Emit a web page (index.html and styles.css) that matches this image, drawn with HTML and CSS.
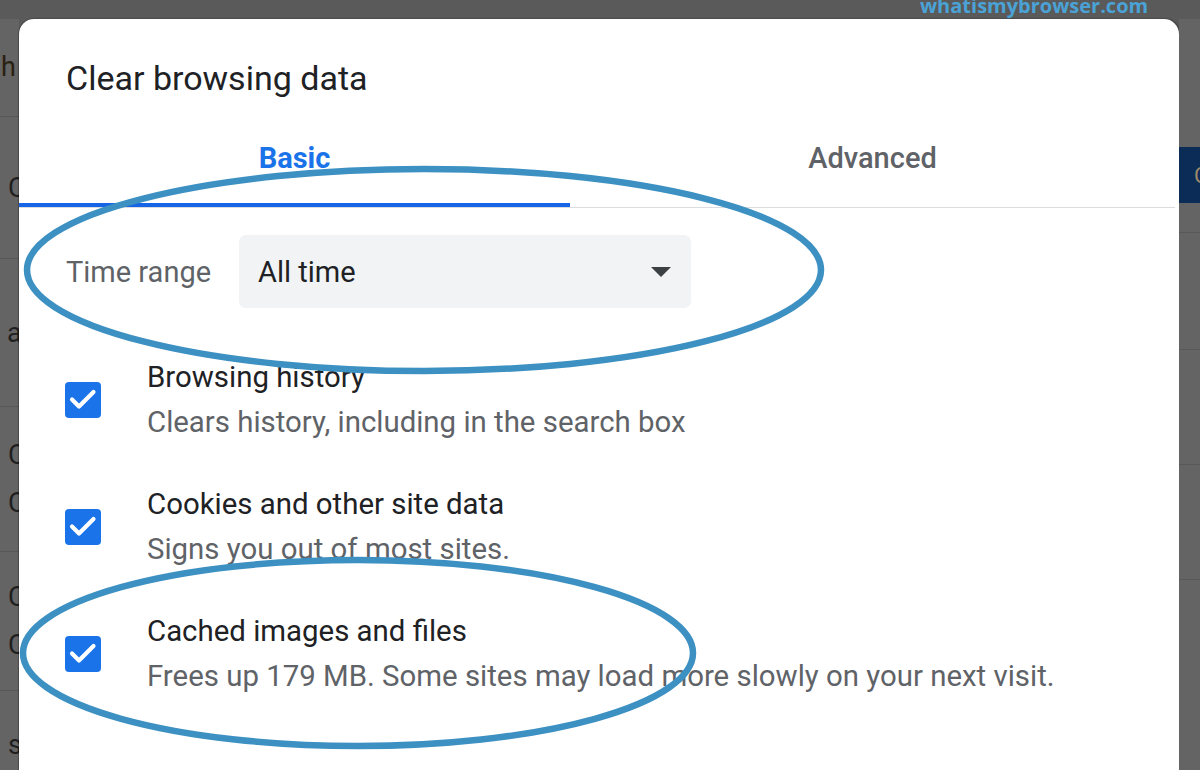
FILE: index.html
```html
<!DOCTYPE html>
<html lang="en">
<head>
<meta charset="utf-8">
<title>Clear browsing data</title>
<link rel="stylesheet" href="styles.css">
</head>
<body>
<div class="screen">
  <div class="strip strip-left">
    <div class="bg-row row-a"><span class="ch ch-h">h</span></div>
    <div class="bg-row row-b"><span class="ch ch-c">C</span></div>
    <div class="bg-row row-c"><span class="ch ch-a">a</span></div>
    <div class="bg-row row-d"><span class="ch ch-c">C</span><span class="ch ch-c">C</span></div>
    <div class="bg-row row-e"><span class="ch ch-c">C</span><span class="ch ch-c">C</span></div>
    <div class="bg-row row-f"><span class="ch ch-s">s</span></div>
  </div>

  <main class="dialog">
    <h1 class="dialog-title">Clear browsing data</h1>
    <div class="tabs">
      <div class="tab tab-active">Basic</div>
      <div class="tab tab-other">Advanced</div>
    </div>

    <div class="time-range">
      <span class="label">Time range</span>
      <div class="select">
        <span>All time</span>
        <span class="arrow"></span>
      </div>
    </div>

    <div class="items">
      <div class="item">
        <div class="checkbox"><svg viewBox="0 0 36 36" width="36" height="36"><path d="M7 17.5 L14 24.5 L28.5 10" fill="none" stroke="#fff" stroke-width="4.2" stroke-linecap="round" stroke-linejoin="round"/></svg></div>
        <div class="item-text">
          <div class="item-title">Browsing history</div>
          <div class="item-desc">Clears history, including in the search box</div>
        </div>
      </div>
      <div class="item">
        <div class="checkbox"><svg viewBox="0 0 36 36" width="36" height="36"><path d="M7 17.5 L14 24.5 L28.5 10" fill="none" stroke="#fff" stroke-width="4.2" stroke-linecap="round" stroke-linejoin="round"/></svg></div>
        <div class="item-text">
          <div class="item-title">Cookies and other site data</div>
          <div class="item-desc">Signs you out of most sites.</div>
        </div>
      </div>
      <div class="item">
        <div class="checkbox"><svg viewBox="0 0 36 36" width="36" height="36"><path d="M7 17.5 L14 24.5 L28.5 10" fill="none" stroke="#fff" stroke-width="4.2" stroke-linecap="round" stroke-linejoin="round"/></svg></div>
        <div class="item-text">
          <div class="item-title">Cached images and files</div>
          <div class="item-desc">Frees up 179 MB. Some sites may load more slowly on your next visit.</div>
        </div>
      </div>
    </div>
  </main>

  <div class="strip strip-right">
    <div class="rbg rbg-1"></div>
    <div class="rbg rbg-btn"><span class="btn-ch">C</span></div>
    <div class="rbg rbg-2"></div>
    <div class="rbg rbg-3"></div>
    <div class="rbg rbg-4"></div>
    <div class="rbg rbg-5"></div>
    <div class="rbg rbg-6"></div>
  </div>
</div>

<div class="watermark">whatismybrowser.com</div>

<svg class="annotations" width="1200" height="770" viewBox="0 0 1200 770">
  <ellipse cx="424" cy="270" rx="397" ry="101" fill="none" stroke="#3c90c2" stroke-width="6.5"/>
  <ellipse cx="358" cy="653" rx="335" ry="93" fill="none" stroke="#3c90c2" stroke-width="6.5"/>
</svg>
</body>
</html>
```

FILE: styles.css
```css
* { box-sizing: border-box; }

html, body {
  margin: 0;
  padding: 0;
}

body {
  width: 1200px;
  height: 770px;
  overflow: hidden;
  background: #5a5a5a;
  font-family: Roboto, "Noto Sans", "Liberation Sans", sans-serif;
  position: relative;
}

.screen {
  display: flex;
  height: 770px;
  overflow: hidden;
}

/* ---------- dimmed page behind the dialog ---------- */
.strip {
  margin-top: 19px;
  background: #646464;
  overflow: hidden;
}

.strip-left {
  width: 19px;
  display: flex;
  flex-direction: column;
}

.bg-row {
  border-bottom: 1px solid #575757;
  display: flex;
  flex-direction: column;
  justify-content: center;
  font-size: 27px;
  line-height: 48px;
  color: #1f1f1f;
  white-space: nowrap;
}

.row-a { height: 99px; }
.row-b { height: 144px; }
.row-c { height: 149px; }
.row-d { height: 147px; }
.row-e { height: 140px; }
.row-f { height: 80px; border-bottom: 0; padding-top: 30px; }

.ch { display: block; }
.ch-h { padding-left: 1px; color: #2a2010; }
.ch-c { padding-left: 8px; }
.ch-a { padding-left: 7px; }
.ch-s { padding-left: 8px; }

.strip-right {
  width: 21px;
  display: flex;
  flex-direction: column;
}

.rbg { border-bottom: 1px solid #585858; }
.rbg-1 { height: 128px; border-bottom: 0; }
.rbg-btn {
  height: 56px;
  background: #0c2c58;
  border-bottom: 0;
  display: flex;
  align-items: center;
  font-size: 22px;
  color: #9a8a6a;
}
.btn-ch { padding-left: 15px; }
.rbg-2 { height: 30px; }
.rbg-3 { height: 117px; }
.rbg-4 { height: 115px; }
.rbg-5 { height: 115px; }
.rbg-6 { height: 115px; border-bottom: 0; }

/* ---------- dialog ---------- */
.dialog {
  width: 1160px;
  flex: none;
  margin-top: 19px;
  height: 751px;
  background: #ffffff;
  border-radius: 15px 15px 0 0;
  box-shadow: 1px 0 2px rgba(0, 0, 0, 0.45), -1px 0 1px rgba(0, 0, 0, 0.25);
  overflow: hidden;
}

.dialog-title {
  margin: 0;
  padding: 39px 0 0 47px;
  font-size: 34px;
  line-height: 40px;
  font-weight: 400;
  color: #202124;
}

.tabs {
  display: flex;
  border-bottom: 1px solid #dadce0;
  margin-right: 4px;
}

.tab {
  padding: 40px 0 29px;
  font-size: 29px;
  line-height: 40px;
  text-align: center;
  position: relative;
}

.tab-active {
  width: 551px;
  color: #1a73e8;
  font-weight: 700;
}

.tab-active::after {
  content: "";
  position: absolute;
  left: 0;
  right: 0;
  bottom: 0;
  height: 4px;
  background: #1565e6;
}

.tab-other {
  flex: 1;
  color: #5f6368;
  font-weight: 500;
}

.time-range {
  display: flex;
  align-items: center;
  gap: 28px;
  margin: 27px 0 0 47px;
}

.label {
  font-size: 29px;
  color: #5f6368;
}

.select {
  width: 452px;
  height: 73px;
  background: #f1f3f4;
  border-radius: 7px;
  display: flex;
  align-items: center;
  justify-content: space-between;
  padding: 0 20px 0 19px;
  font-size: 29px;
  color: #202124;
}

.arrow {
  width: 0;
  height: 0;
  border-left: 10px solid transparent;
  border-right: 10px solid transparent;
  border-top: 10px solid #3c4043;
}

.items {
  margin-top: 28px;
}

.item {
  display: flex;
  align-items: center;
  height: 127px;
  padding-left: 46px;
}

.checkbox {
  width: 36px;
  height: 36px;
  flex: none;
  background: #1a73e8;
  border-radius: 4px;
  display: flex;
}

.item-text {
  margin-left: 46px;
  margin-top: 1px;
}

.item-title {
  font-size: 29.4px;
  line-height: 43px;
  color: #202124;
}

.item-desc {
  margin-top: 2px;
  font-size: 29.4px;
  line-height: 43px;
  color: #5f6368;
}

/* ---------- overlays ---------- */
.watermark {
  position: absolute;
  top: -8px;
  left: 920px;
  font-family: "Open Sans", "DejaVu Sans", sans-serif;
  font-weight: 700;
  font-size: 20px;
  color: #4aa2d6;
}

.annotations {
  position: absolute;
  top: 0;
  left: 0;
  pointer-events: none;
}
```
